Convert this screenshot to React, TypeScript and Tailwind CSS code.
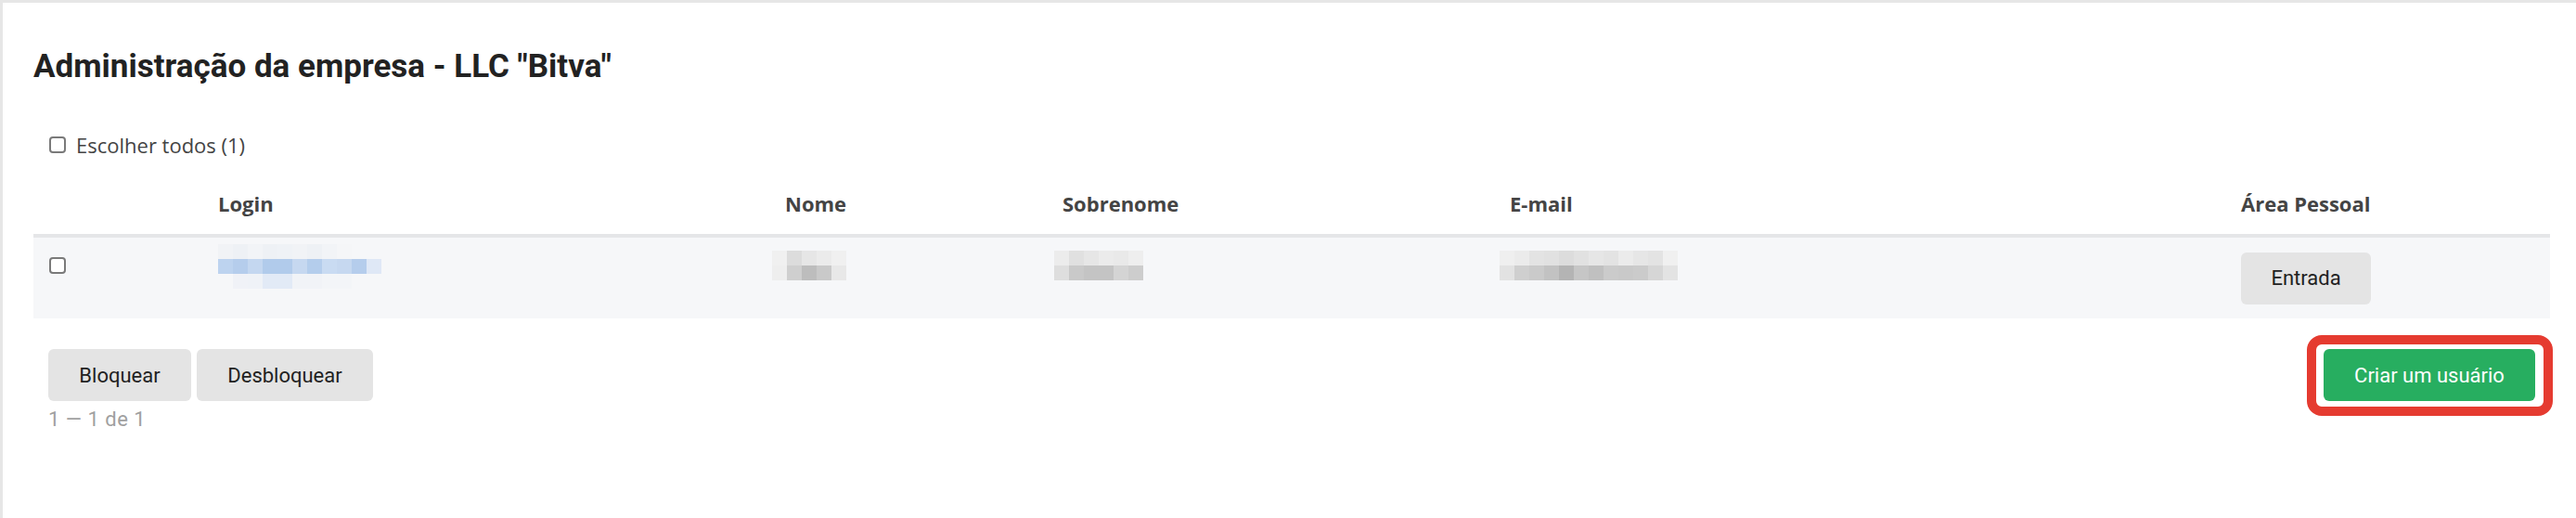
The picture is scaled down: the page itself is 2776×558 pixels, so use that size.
import React from "react";

const roboto = { fontFamily: "Roboto, 'Liberation Sans', sans-serif" };
const openSans = { fontFamily: "'Open Sans', 'Liberation Sans', sans-serif" };

// pixelated (blurred) cell content, 16px blocks
const Pix = ({ rows, className }: { rows: string[][]; className?: string }) => (
    <div className={"flex flex-col " + (className ?? "")}>
        {rows.map((row, i) => (
            <div key={i} className="flex">
                {row.map((c, j) => (
                    <div key={j} className="w-4 h-4" style={{ backgroundColor: c }} />
                ))}
            </div>
        ))}
    </div>
);

const Box = () => (
    <span className="block w-[18px] h-[18px] rounded-[4px] border-2 border-[#7a7a7a] bg-white" />
);

const T = "transparent";

const loginPix = [
    [T, "#f1f3f6", "#eef1f5", "#f2f4f7", "#eef1f5", "#eff2f6", "#f1f3f6", "#eef1f5", "#f2f4f7", "#f5f6f8", T, T],
    [T, "#bdd3ef", "#b5cdec", "#c4d7f0", "#b1cbeb", "#b1cbeb", "#c6d8f0", "#b4cdec", "#c9dbf2", "#c6d8f0", "#b5cdec", "#dfe8f6"],
    [T, T, "#f0f2f7", "#eff2f7", "#e2eaf6", "#e2eaf6", "#f1f3f7", "#f1f3f7", "#f3f5f8", "#f3f5f8", T, T],
];

const nomePix = [
    ["#f0f0f0", "#dcdcdc", "#e6e6e6", "#ebebeb", "#f0f0f0"],
    ["#eeeeee", "#cfcfcf", "#bdbdbd", "#c9c9c9", "#e8e8e8"],
];

const sobrenomePix = [
    ["#ececec", "#e0e0e0", "#e6e6e6", "#ebebeb", "#e9e9e9", "#eeeeee"],
    ["#dedede", "#c9c9c9", "#c4c4c4", "#c4c4c4", "#d4d4d4", "#cdcdcd"],
];

const emailPix = [
    ["#efefef", "#ebebeb", "#e3e3e3", "#e1e1e1", "#dcdcdc", "#e1e1e1", "#e6e6e6", "#e3e3e3", "#ebebeb", "#e6e6e6", "#e3e3e3", "#f0f0f0"],
    ["#e2e2e2", "#cfcfcf", "#cacaca", "#c2c2c2", "#b4b4b4", "#c6c6c6", "#c0c0c0", "#cbcbcb", "#c9c9c9", "#cbcbcb", "#d6d6d6", "#e3e3e3"],
];

const cols = "grid grid-cols-[199px_611px_299px_482px_788px_1fr]";

const App: React.FC = () => {
    return (
        <div className="w-full min-h-[558px] bg-white border-t-[3px] border-l-[3px] border-[#e6e6e6] pl-[33px] pr-[28px] pt-[48px]">
            <h1 className="text-[35px] leading-[42px] font-bold text-[#222222]" style={roboto}>
                Administração da empresa - LLC "Bitva"
            </h1>

            <label className="mt-[48px] h-[30px] pl-[17px] flex items-center gap-[11px] text-[22px] text-[#444444]" style={openSans}>
                <Box />
                <span className="leading-[30px]">Escolher todos (1)</span>
            </label>

            <div
                className={cols + " mt-[15px] pt-[18px] pb-[18px] border-b-4 border-[#e5e6e8] text-[22px] leading-[30px] font-bold text-[#444444]"}
                style={openSans}
            >
                <div />
                <div>Login</div>
                <div>Nome</div>
                <div>Sobrenome</div>
                <div>E-mail</div>
                <div>Área Pessoal</div>
            </div>

            <div className={cols + " h-[87px] bg-[#f6f7f9]"}>
                <div className="pl-[17px] pt-[21px]">
                    <Box />
                </div>
                <div className="pt-[7px]">
                    <Pix rows={loginPix} className="-ml-4" />
                </div>
                <div className="pt-[14px]">
                    <Pix rows={nomePix} className="-ml-[14px]" />
                </div>
                <div className="pt-[14px]">
                    <Pix rows={sobrenomePix} className="-ml-[9px]" />
                </div>
                <div className="pt-[14px]">
                    <Pix rows={emailPix} className="-ml-[11px]" />
                </div>
                <div className="flex items-center">
                    <button
                        className="w-[140px] h-[56px] rounded-[6px] bg-[#e4e4e4] text-[22px] text-[#222222]"
                        style={roboto}
                    >
                        Entrada
                    </button>
                </div>
            </div>

            <div className="mt-[33px] px-4 flex justify-between items-start" style={roboto}>
                <div>
                    <div className="flex gap-[6px]">
                        <button className="w-[154px] h-[56px] rounded-[6px] bg-[#e4e4e4] text-[22px] text-[#222222]">
                            Bloquear
                        </button>
                        <button className="w-[190px] h-[56px] rounded-[6px] bg-[#e4e4e4] text-[22px] text-[#222222]">
                            Desbloquear
                        </button>
                    </div>
                    <div className="mt-[7px] text-[22px] leading-[26px] tracking-[0.5px] text-[#a0a0a0]">1 — 1 de 1</div>
                </div>
                <div className="relative">
                    <button className="w-[228px] h-[56px] rounded-[6px] bg-[#27ae60] text-[22px] text-white">
                        Criar um usuário
                    </button>
                    <span className="absolute -left-[18px] -right-[19px] -top-[15px] -bottom-[16px] border-[10px] border-[#e53b30] rounded-[16px] pointer-events-none" />
                </div>
            </div>
        </div>
    );
};

export default App;
